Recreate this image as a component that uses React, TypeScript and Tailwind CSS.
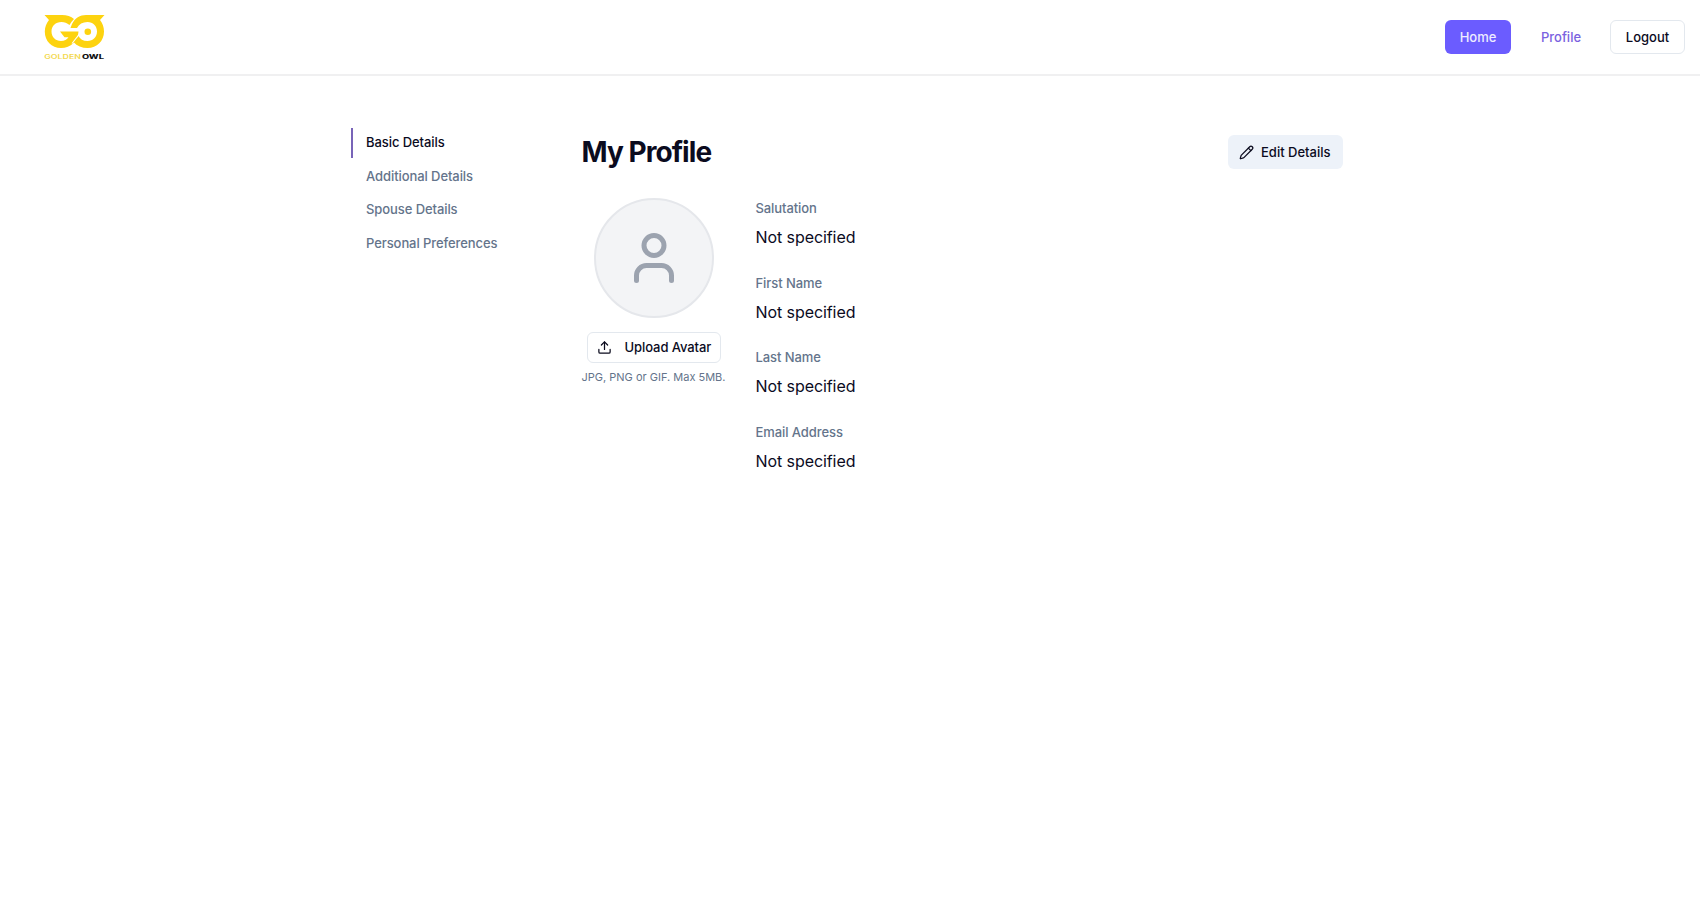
import { Pencil, Upload, User } from "lucide-react";

const sections = ["Basic Details", "Additional Details", "Spouse Details", "Personal Preferences"];
const fields = ["Salutation", "First Name", "Last Name", "Email Address"];

function Logo() {
  return (
    <svg className="ml-[43px] mt-[13px] h-[48px] w-[64px]" viewBox="0 0 64 48">
      <path fill="#fdd30f" d="M61.500 2H43C37 2 32 5 29 11L27.500 15H34C36 11 39.500 9 44.500 9C50 9 54 13 54 18.500C54 24 50 28 44.500 28C40 28 37 26 35.500 23L30.500 29C34 33 39 35 44.500 35C54 35 61 28 61 18.500C61 14 59.500 10 57 7Z" />
      <path fill="#fdd30f" d="M1.500 2H19C24 2 28 3.500 31 6C29 8 27.500 10 26.500 12C24 10 21.500 9 18.500 9C12.500 9 8.500 13 8.500 18.500C8.500 24 12.500 28 18 28C21.500 28 24 26.500 25.500 24.200H21.500L17 18.500H35.500C35 28 28 35 18 35C8.500 35 1.800 28 1.800 18.500C1.800 14 3.500 10 6 7Z" />
      <path stroke="#ffffff" strokeWidth="1.100" fill="none" d="M36 21.500L29 30.500" />
      <circle cx="44.800" cy="18.700" r="3.300" fill="#fdd30f" />
      <text transform="translate(1.200 45.500) scale(1.530 1)" fontFamily="Inter, sans-serif" fontSize="5.800" fontWeight="600" fill="#f3d94f" textLength="24" lengthAdjust="spacingAndGlyphs">GOLDEN</text>
      <text transform="translate(39 45.500) scale(1.600 1)" fontFamily="Inter, sans-serif" fontSize="5.800" fontWeight="800" fill="#111111" textLength="13.700" lengthAdjust="spacingAndGlyphs">OWL</text>
    </svg>
  );
}

export default function App() {
  return (
    <div className="min-h-[910px] bg-white font-['Inter',sans-serif] text-[#0b0b1e]">
      <header className="flex h-[76px] items-start justify-between border-b-2 border-[#f0f0f1]">
        <Logo />
        <nav className="mr-[15px] mt-5 flex text-[13px] font-medium">
          <button className="h-[34px] w-[66px] rounded-md bg-[#6b5cff] pt-px text-[#eeecff]">Home</button>
          <button className="ml-[17px] h-[34px] w-[66px] pt-px text-[#7a62e0]">Profile</button>
          <button className="ml-4 h-[34px] w-[75px] rounded-md border border-[#e3e8ee] pt-px">Logout</button>
        </nav>
      </header>
      <main className="ml-[351px] flex w-[992px] pt-[52px]">
        <aside className="flex w-[230.500px] flex-col gap-[3.5px] text-[13px] font-medium tracking-[-0.08px] text-[#64748b]">
          {sections.map((s, i) => (
            <a key={s} className={i === 0 ? "flex h-[30px] items-center border-l-2 border-[#7864b8] pl-[13px] text-[#0b0b1e]" : "flex h-[30px] items-center border-l-2 border-transparent pl-[13px]"}>{s}</a>
          ))}
        </aside>
        <section className="flex-1">
          <div className="flex items-center justify-between pt-[7px]">
            <h1 className="pt-px text-[28px] font-bold leading-[33px] tracking-[-0.95px]">My Profile</h1>
            <button className="flex h-[34px] w-[115px] items-center gap-[7px] rounded-md bg-[#edf2f9] pl-[11px] text-[13px] font-medium">
              <Pencil size={15} /><span className="pt-px">Edit Details</span>
            </button>
          </div>
          <div className="flex pt-[29px]">
            <div className="flex w-[144px] flex-col items-center">
              <div className="flex size-[120px] items-center justify-center rounded-full border-2 border-[#e5e7eb] bg-[#f3f4f6] text-[#9ca3af]">
                <User size={60} />
              </div>
              <button className="mt-[14px] flex h-[31px] w-[134px] items-center gap-[13px] whitespace-nowrap rounded-md border border-[#e3e8ee] pl-[9px] text-[13px] font-medium tracking-[-0.08px]">
                <Upload size={15} />Upload Avatar
              </button>
              <p className="mt-[7px] whitespace-nowrap text-[11px] leading-[15px] text-[#64748b]">JPG, PNG or GIF. Max 5MB.</p>
            </div>
            <dl className="ml-[30px] flex flex-col gap-[18.5px]">
              {fields.map((f) => (
                <div key={f} className="h-14">
                  <dt className="text-[13px] font-medium leading-[20px] tracking-[-0.08px] text-[#64748b]">{f}</dt>
                  <dd className="mt-[7px] text-[16px] leading-[24px] tracking-[-0.08px]">Not specified</dd>
                </div>
              ))}
            </dl>
          </div>
        </section>
      </main>
    </div>
  );
}
